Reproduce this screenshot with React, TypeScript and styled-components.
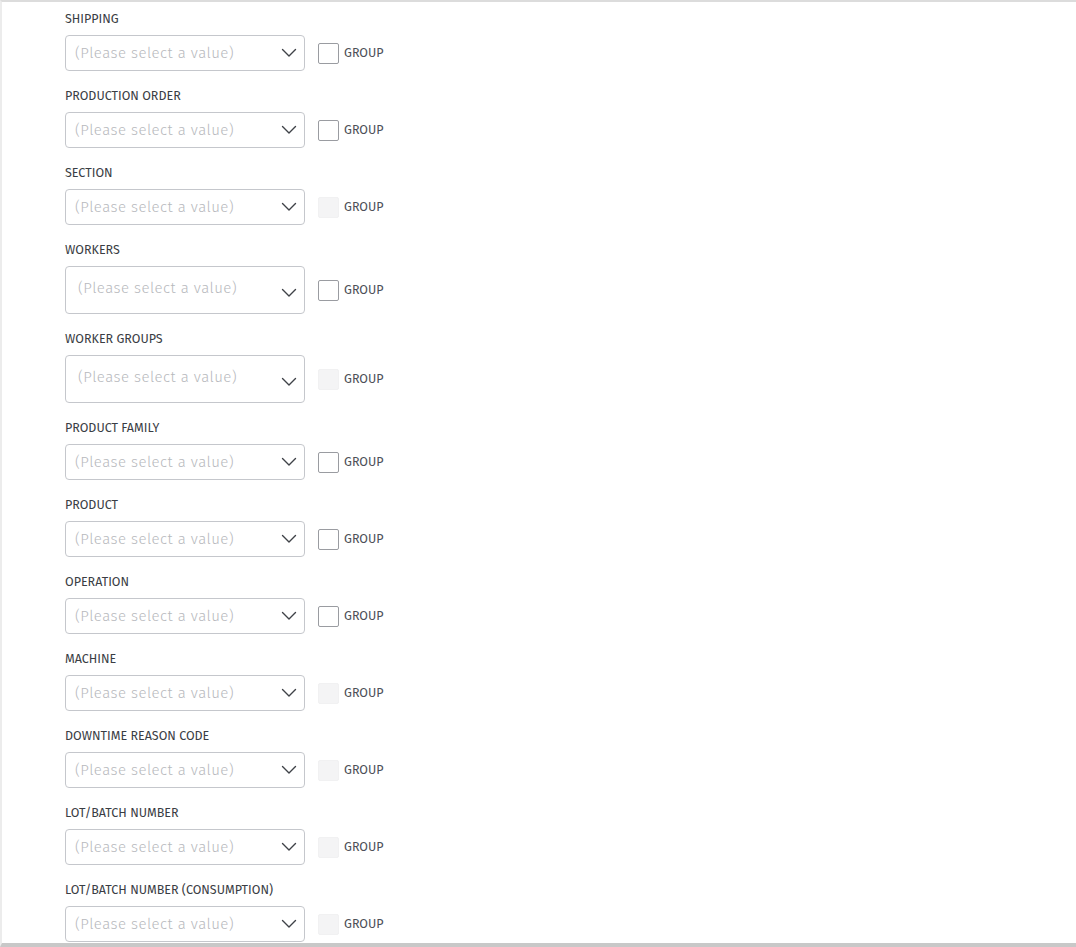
import React from "react";
import styled, { createGlobalStyle } from "styled-components";

const Global = createGlobalStyle`
  html, body { margin: 0; padding: 0; background: #ffffff; }
  body { font-family: "Fira Sans", "Open Sans", "Noto Sans", sans-serif; }
`;

const Panel = styled.div`
  box-sizing: border-box;
  width: 1076px;
  height: 947px;
  overflow: hidden;
  border-top: 2px solid #dcdcdc;
  border-left: 2px solid #ececec;
  border-bottom: 4px solid #c8c8c8;
  padding: 8px 0 0 63px;
  display: flex;
  flex-direction: column;
`;

const Field = styled.div`
  display: flex;
  flex-direction: column;
  margin-bottom: 16px;
`;

const Label = styled.div`
  font-family: "Fira Sans", "Roboto", "Noto Sans", sans-serif;
  font-size: 12.5px;
  line-height: 17px;
  font-weight: 400;
  color: #3a3d44;
  margin-bottom: 8px;
  white-space: nowrap;
`;

const Row = styled.div`
  display: flex;
  align-items: center;
  gap: 13px;
`;

const Select = styled.div<{ $tall?: boolean }>`
  box-sizing: border-box;
  width: 240px;
  height: ${(p) => (p.$tall ? 48 : 36)}px;
  border: 1px solid #c5c7cc;
  border-radius: 4px;
  background: #fff;
  display: flex;
  align-items: center;
  padding: ${(p) => (p.$tall ? "0 0 0 12px" : "0 0 0 9px")};
`;

const Placeholder = styled.span<{ $tall?: boolean }>`
  flex: 1;
  font-family: "Fira Sans", "Open Sans", "Noto Sans", sans-serif;
  font-size: 15px;
  font-weight: 300;
  letter-spacing: 0.45px;
  color: #b7b9bd;
  white-space: nowrap;
  margin-top: ${(p) => (p.$tall ? "-4px" : "0")};
`;

const Chevron = styled.svg<{ $tall?: boolean }>`
  width: 16px;
  height: 10px;
  margin-right: 7px;
  margin-top: ${(p) => (p.$tall ? "5px" : "0")};
`;

const GroupToggle = styled.label`
  display: flex;
  align-items: center;
  gap: 5px;
`;

const Box = styled.span<{ $disabled?: boolean }>`
  box-sizing: border-box;
  width: 21px;
  height: 21px;
  border-radius: 2px;
  border: 1px solid ${(p) => (p.$disabled ? "#f1f1f2" : "#9a9ca1")};
  background: ${(p) => (p.$disabled ? "#f4f4f5" : "#ffffff")};
`;

const GroupText = styled.span`
  font-family: "Fira Sans", "Roboto", "Noto Sans", sans-serif;
  font-size: 12.5px;
  font-weight: 400;
  color: #4d5058;
  margin-top: -2px;
`;

type FieldDef = { label: string; disabled?: boolean; tall?: boolean };

const fields: FieldDef[] = [
  { label: "SHIPPING" },
  { label: "PRODUCTION ORDER" },
  { label: "SECTION", disabled: true },
  { label: "WORKERS", tall: true },
  { label: "WORKER GROUPS", disabled: true, tall: true },
  { label: "PRODUCT FAMILY" },
  { label: "PRODUCT" },
  { label: "OPERATION" },
  { label: "MACHINE", disabled: true },
  { label: "DOWNTIME REASON CODE", disabled: true },
  { label: "LOT/BATCH NUMBER", disabled: true },
  { label: "LOT/BATCH NUMBER (CONSUMPTION)", disabled: true },
];

export default function App() {
  return (
    <>
      <Global />
      <Panel>
        {fields.map((f) => (
          <Field key={f.label}>
            <Label>{f.label}</Label>
            <Row>
              <Select $tall={f.tall}>
                <Placeholder $tall={f.tall}>(Please select a value)</Placeholder>
                <Chevron $tall={f.tall} viewBox="0 0 16 10" fill="none">
                  <path d="M1.5 1.5 L8 8 L14.5 1.5" stroke="#3f4248" strokeWidth="1.4" strokeLinecap="round" strokeLinejoin="round" />
                </Chevron>
              </Select>
              <GroupToggle>
                <Box $disabled={f.disabled} />
                <GroupText>GROUP</GroupText>
              </GroupToggle>
            </Row>
          </Field>
        ))}
      </Panel>
    </>
  );
}
